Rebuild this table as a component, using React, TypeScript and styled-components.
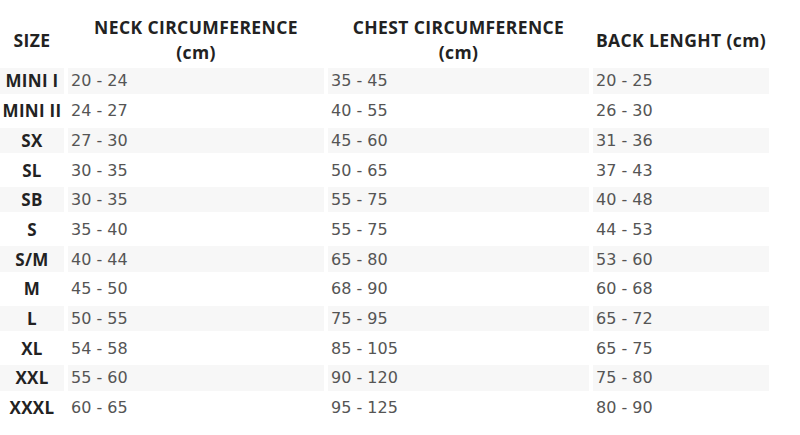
import styled, { createGlobalStyle } from 'styled-components';

const GlobalStyle = createGlobalStyle`
	html, body {
		margin: 0;
		padding: 0;
		background: #fff;
	}
`;

const sizes = [
	{ size: 'MINI I', neck: '20 - 24', chest: '35 - 45', back: '20 - 25' },
	{ size: 'MINI II', neck: '24 - 27', chest: '40 - 55', back: '26 - 30' },
	{ size: 'SX', neck: '27 - 30', chest: '45 - 60', back: '31 - 36' },
	{ size: 'SL', neck: '30 - 35', chest: '50 - 65', back: '37 - 43' },
	{ size: 'SB', neck: '30 - 35', chest: '55 - 75', back: '40 - 48' },
	{ size: 'S', neck: '35 - 40', chest: '55 - 75', back: '44 - 53' },
	{ size: 'S/M', neck: '40 - 44', chest: '65 - 80', back: '53 - 60' },
	{ size: 'M', neck: '45 - 50', chest: '68 - 90', back: '60 - 68' },
	{ size: 'L', neck: '50 - 55', chest: '75 - 95', back: '65 - 72' },
	{ size: 'XL', neck: '54 - 58', chest: '85 - 105', back: '65 - 75' },
	{ size: 'XXL', neck: '55 - 60', chest: '90 - 120', back: '75 - 80' },
	{ size: 'XXXL', neck: '60 - 65', chest: '95 - 125', back: '80 - 90' },
];

export default function App() {
	return (
		<>
			<GlobalStyle />
			<Page>
				<Table>
					<Head>SIZE</Head>
					<Head>
						NECK CIRCUMFERENCE
						<br />
						(cm)
					</Head>
					<Head>
						CHEST CIRCUMFERENCE
						<br />
						(cm)
					</Head>
					<Head>BACK LENGHT (cm)</Head>
					{sizes.map((row, i) => (
						<Row key={row.size} $striped={i % 2 === 0}>
							<SizeCell>{row.size}</SizeCell>
							<ValueCell>{row.neck}</ValueCell>
							<ValueCell>{row.chest}</ValueCell>
							<ValueCell>{row.back}</ValueCell>
						</Row>
					))}
				</Table>
			</Page>
		</>
	);
}

const Page = styled.div`
	width: 800px;
	height: 435px;
	background: #fff;
	overflow: hidden;
`;

const Table = styled.div`
	display: grid;
	grid-template-columns: 64px 256px 261px 176px;
	grid-template-rows: 52px;
	grid-auto-rows: 25.5px;
	column-gap: 4px;
	row-gap: 4.2px;
	padding-top: 12px;
`;

const Head = styled.div`
	display: flex;
	align-items: center;
	justify-content: center;
	padding-top: 4px;
	text-align: center;
	font-family: 'Open Sans', sans-serif;
	font-weight: 700;
	font-size: 17.5px;
	letter-spacing: 0.4px;
	line-height: 25px;
	color: #222;
	white-space: nowrap;
`;

const Row = styled.div<{ $striped: boolean }>`
	display: contents;
	& > div {
		background: ${(p) => (p.$striped ? '#f7f7f7' : '#fff')};
	}
`;

const SizeCell = styled.div`
	display: flex;
	align-items: center;
	justify-content: center;
	font-family: 'Open Sans', sans-serif;
	font-weight: 700;
	font-size: 17px;
	letter-spacing: 0.3px;
	color: #222;
	white-space: nowrap;
`;

const ValueCell = styled.div`
	display: flex;
	align-items: center;
	padding-left: 3px;
	font-family: 'DejaVu Sans', sans-serif;
	font-size: 16px;
	color: #555;
	white-space: nowrap;
`;
